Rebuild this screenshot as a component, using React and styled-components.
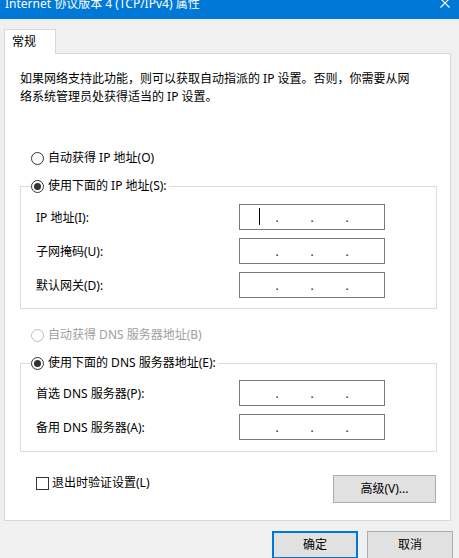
import React from 'react';
import styled, { createGlobalStyle } from 'styled-components';

const GlobalStyle = createGlobalStyle`
  html, body {
    margin: 0;
    padding: 0;
    background: #f0f0f0;
  }
  body {
    font-family: "Segoe UI", "Noto Sans", "Noto Sans CJK SC", sans-serif;
    font-size: 12px;
    color: #000;
  }
`;

const Window = styled.div`
  width: 459px;
  height: 558px;
  background: #f0f0f0;
  overflow: hidden;
  display: flex;
  flex-direction: column;
`;

const TitleBar = styled.div`
  height: 19px;
  flex: none;
  background: #0078d7;
  color: #fff;
  display: flex;
  align-items: flex-start;
  padding-left: 5px;
  overflow: hidden;
`;

const Title = styled.span`
  line-height: 14px;
  margin-top: -3px;
  white-space: nowrap;
`;

const Close = styled.svg`
  margin-left: auto;
  margin-right: 9px;
  margin-top: -2px;
  flex: none;
`;

const Body = styled.div`
  padding: 10px 0 0 4px;
`;

const TabStrip = styled.div`
  display: flex;
`;

const Tab = styled.div`
  position: relative;
  z-index: 1;
  box-sizing: border-box;
  width: 52px;
  height: 25px;
  margin-bottom: -1px;
  padding-left: 7px;
  display: flex;
  align-items: center;
  background: #fff;
  border: 1px solid #d9d9d9;
  border-bottom: none;
  line-height: 18px;
`;

const Panel = styled.div`
  box-sizing: border-box;
  width: 447px;
  height: 468px;
  background: #fff;
  border: 1px solid #d9d9d9;
  display: flex;
  flex-direction: column;
`;

const Description = styled.p`
  margin: 16px 0 0 15px;
  line-height: 18px;
  white-space: nowrap;
`;

const RadioRow = styled.label`
  display: flex;
  align-items: center;
  gap: 4px;
  line-height: 18px;
  margin: ${(p) => p.$top}px 0 0 26px;
  color: ${(p) => (p.$disabled ? '#a0a0a0' : '#000')};
  white-space: nowrap;
`;

const RadioDot = styled.span`
  box-sizing: border-box;
  width: 13px;
  height: 13px;
  flex: none;
  border-radius: 50%;
  border: 1px solid ${(p) => (p.$disabled ? '#bcbcbc' : '#333')};
  background: #fff;
  display: flex;
  align-items: center;
  justify-content: center;

  &::after {
    content: '';
    width: 7px;
    height: 7px;
    border-radius: 50%;
    background: #333;
    display: ${(p) => (p.$checked ? 'block' : 'none')};
  }
`;

const Group = styled.fieldset`
  margin: 10px 13px 0 15px;
  padding: ${(p) => p.$padTop}px 0 ${(p) => p.$padBottom}px 10px;
  border: 1px solid #dcdcdc;
  min-width: 0;
`;

const Legend = styled.legend`
  padding: 0 2px 0 0;
  margin: 0;
`;

const LegendRadio = styled(RadioRow)`
  margin: 0;
`;

const Fields = styled.div`
  display: grid;
  grid-template-columns: 203px 146px;
  row-gap: 8px;
  padding-left: 5px;
  align-items: center;
`;

const FieldLabel = styled.span`
  line-height: 18px;
  white-space: nowrap;
  padding-top: 2px;
`;

const IpBox = styled.div`
  box-sizing: border-box;
  height: 26px;
  border: 1px solid #7a7a7a;
  background: #fff;
  display: flex;
  justify-content: center;
  align-items: stretch;
`;

const Octet = styled.span`
  width: 33px;
  display: flex;
  align-items: center;
  justify-content: center;
`;

const Dot = styled.span`
  width: 2px;
  display: flex;
  justify-content: center;
  line-height: 24px;
  padding-top: 1px;
  color: #222;
`;

const Caret = styled.span`
  width: 1px;
  height: 17px;
  margin-top: -1px;
  background: #000;
`;

const BottomRow = styled.div`
  display: flex;
  justify-content: space-between;
  align-items: flex-start;
  margin: 22px 14px 0 31px;
`;

const CheckRow = styled.label`
  display: flex;
  align-items: center;
  gap: 3px;
  line-height: 18px;
`;

const CheckBox = styled.span`
  box-sizing: border-box;
  width: 13px;
  height: 13px;
  border: 1px solid #333;
  background: #fff;
`;

const Button = styled.button`
  box-sizing: border-box;
  width: ${(p) => p.$width}px;
  height: 28px;
  margin-top: ${(p) => p.$top || 0}px;
  padding: 0;
  font: inherit;
  color: #000;
  background: #e1e1e1;
  border: ${(p) => (p.$default ? '2px solid #0078d7' : '1px solid #adadad')};
  line-height: 18px;
`;

const Footer = styled.div`
  display: flex;
  justify-content: flex-end;
  gap: 9px;
  margin-top: 10px;
  padding-right: 6px;
`;

const IpField = ({ caret }) => (
  <IpBox>
    <Octet>{caret && <Caret />}</Octet>
    <Dot>.</Dot>
    <Octet />
    <Dot>.</Dot>
    <Octet />
    <Dot>.</Dot>
    <Octet />
  </IpBox>
);

export default function App() {
  return (
    <>
      <GlobalStyle />
      <Window>
        <TitleBar>
          <Title>Internet 协议版本 4 (TCP/IPv4) 属性</Title>
          <Close width="10" height="10" viewBox="0 0 10 10">
            <path d="M0.5 0.5 L9.5 9.5 M9.5 0.5 L0.5 9.5" stroke="#fff" strokeWidth="1.2" fill="none" />
          </Close>
        </TitleBar>
        <Body>
          <TabStrip>
            <Tab>常规</Tab>
          </TabStrip>
          <Panel>
            <Description>
              如果网络支持此功能，则可以获取自动指派的 IP 设置。否则，你需要从网
              <br />
              络系统管理员处获得适当的 IP 设置。
            </Description>

            <RadioRow $top={43}>
              <RadioDot />
              自动获得 IP 地址(O)
            </RadioRow>

            <Group $padTop={9} $padBottom={10}>
              <Legend>
                <LegendRadio>
                  <RadioDot $checked />
                  使用下面的 IP 地址(S):
                </LegendRadio>
              </Legend>
              <Fields>
                <FieldLabel>IP 地址(I):</FieldLabel>
                <IpField caret />
                <FieldLabel>子网掩码(U):</FieldLabel>
                <IpField />
                <FieldLabel>默认网关(D):</FieldLabel>
                <IpField />
              </Fields>
            </Group>

            <RadioRow $top={17} $disabled>
              <RadioDot $disabled />
              自动获得 DNS 服务器地址(B)
            </RadioRow>

            <Group $padTop={8} $padBottom={11}>
              <Legend>
                <LegendRadio>
                  <RadioDot $checked />
                  使用下面的 DNS 服务器地址(E):
                </LegendRadio>
              </Legend>
              <Fields>
                <FieldLabel>首选 DNS 服务器(P):</FieldLabel>
                <IpField />
                <FieldLabel>备用 DNS 服务器(A):</FieldLabel>
                <IpField />
              </Fields>
            </Group>

            <BottomRow>
              <CheckRow>
                <CheckBox />
                退出时验证设置(L)
              </CheckRow>
              <Button $width={103} $top={1}>高级(V)...</Button>
            </BottomRow>
          </Panel>
          <Footer>
            <Button $width={86} $default>确定</Button>
            <Button $width={86}>取消</Button>
          </Footer>
        </Body>
      </Window>
    </>
  );
}
